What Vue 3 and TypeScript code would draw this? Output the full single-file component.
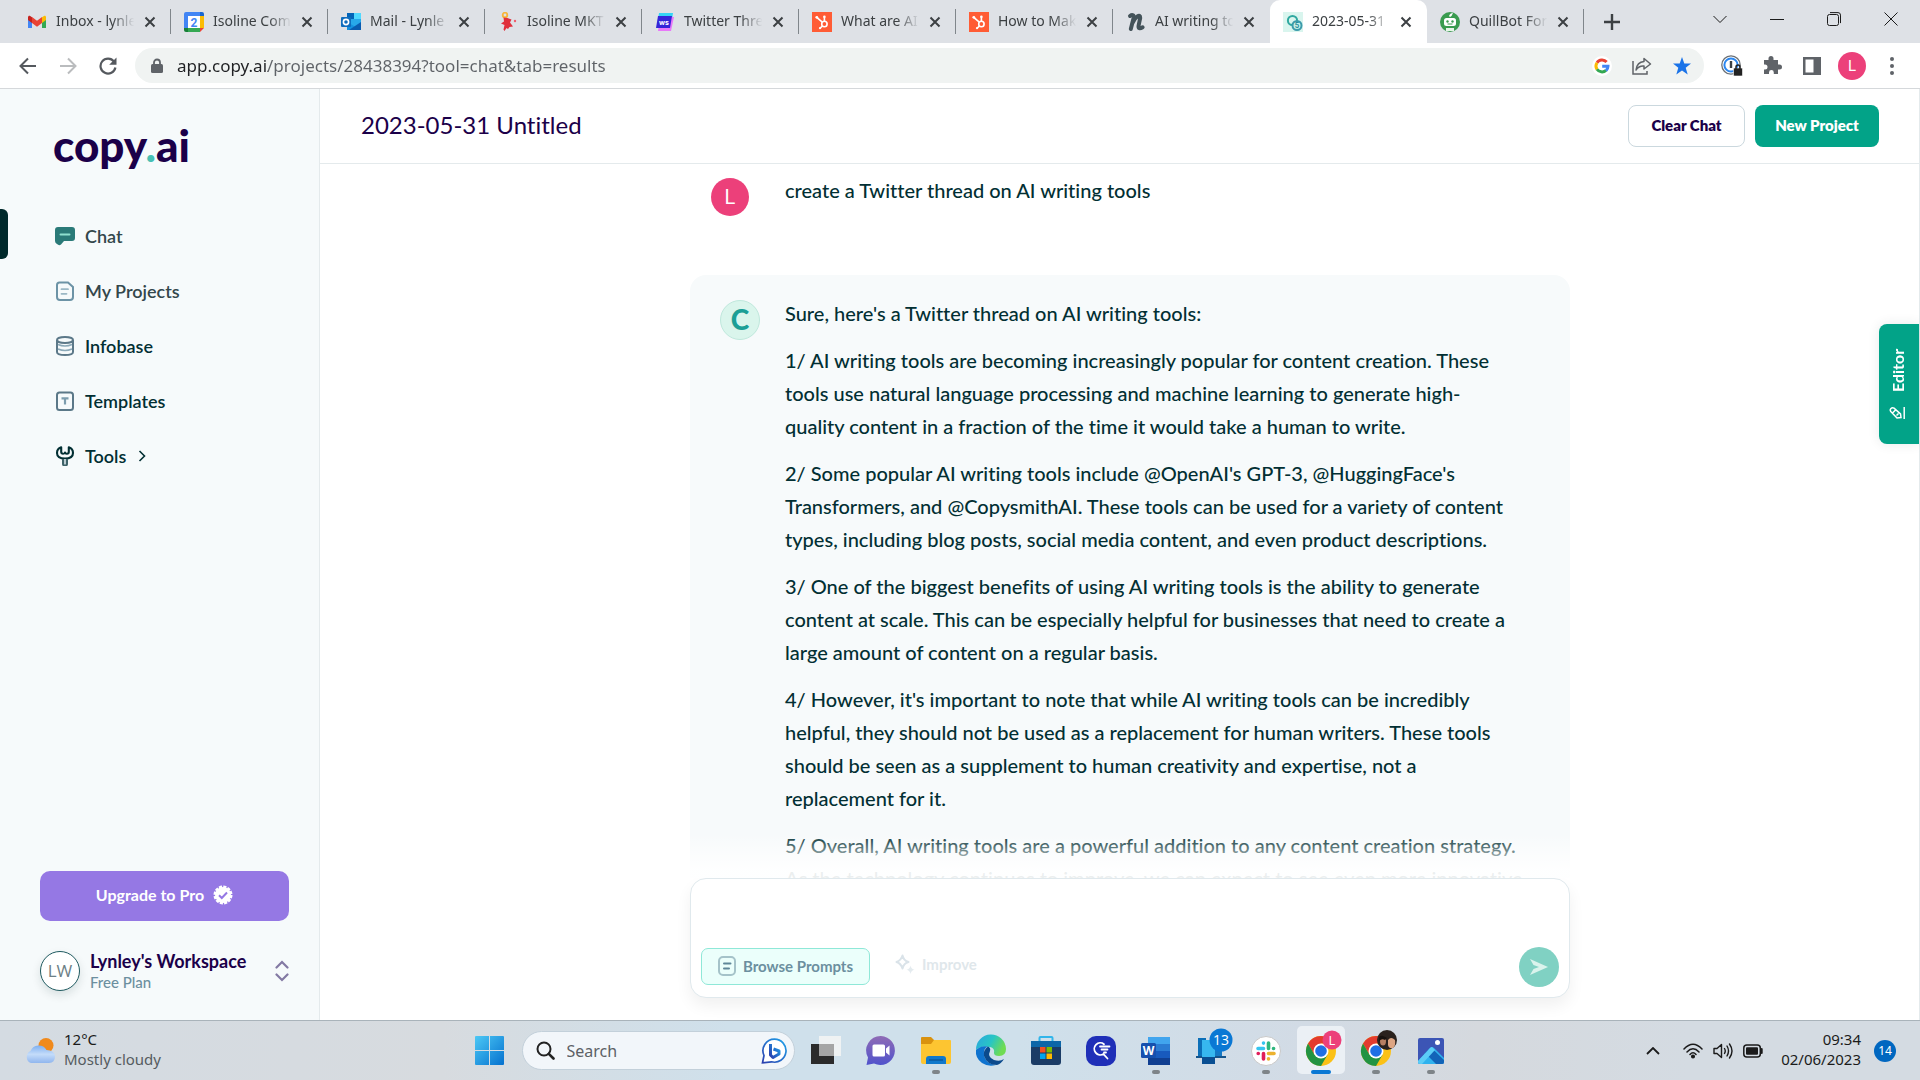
<script setup lang="ts">
import { ref } from 'vue'

interface Tab { title: string; icon: string; active?: boolean }
interface NavItem { label: string; icon: string; active?: boolean; strong?: boolean; more?: boolean }
interface TaskApp { name: string; icon: string; state?: 'open' | 'active' }

const hubspot =
  '<rect width="20" height="20" fill="#ff5c35"/><g fill="none" stroke="#fff" stroke-width="1.6"><circle cx="12.4" cy="12" r="2.7"/><path d="M12.4 9.2V5M10.3 10.2L5 5.6M10.4 14l-2.2 2.1"/></g><circle cx="12.4" cy="4.8" r="1.3" fill="#fff"/><circle cx="4.8" cy="5.3" r="1.4" fill="#fff"/><circle cx="8" cy="16.2" r="1.1" fill="#fff"/>'

const tabs: Tab[] = [
  { title: 'Inbox - lynle', icon: '<path d="M1 5v11h4V9z" fill="#4285f4"/><path d="M19 5v11h-4V9z" fill="#34a853"/><path d="M15 5.2L17 4c1-.6 2 0 2 1.200V8l-4 3z" fill="#fbbc04"/><path d="M5 5l5 3.800L15 5v6l-5 3.800L5 11z" fill="#ea4335"/><path d="M1 5.200C1 4 2.200 3.300 3.200 4L5 5.200V11L1 8z" fill="#c5221f"/>' },
  { title: 'Isoline Com', icon: '<path d="M0 2Q0 0 2 0H16V4H4V16H0Z" fill="#4285f4"/><path d="M16 0h2q2 0 2 2v2h-4z" fill="#1967d2"/><path d="M16 4h4v12h-4z" fill="#fbbc04"/><path d="M4 16h12v4H4z" fill="#34a853"/><path d="M0 16h4v4H2q-2 0-2-2z" fill="#188038"/><path d="M16 16h4l-4 4z" fill="#ea4335"/><path d="M4 4h12v12H4z" fill="#fff"/><text x="10" y="14.500" font-family="Roboto, sans-serif" font-size="12" font-weight="700" text-anchor="middle" fill="#4285f4">2</text>' },
  { title: 'Mail - Lynle', icon: '<rect x="6" y="1" width="14" height="16" rx="1" fill="#28a8ea"/><path d="M6 1h7v6H6z" fill="#0364b8"/><path d="M13 1h7v6h-7z" fill="#50d9ff"/><path d="M6 10l14 8H6z" fill="#1490df"/><path d="M20 10v8H8z" fill="#0a5cb0"/><rect y="5" width="10" height="10" rx="1" fill="#0f6cbd"/><circle cx="5" cy="10" r="2.600" fill="none" stroke="#fff" stroke-width="1.600"/>' },
  { title: 'Isoline MKT', icon: '<circle cx="7" cy="3" r="2.300" fill="none" stroke="#f7b538" stroke-width="1.800"/><path d="M5.500 5.500l4 .5 4 1.500-1.500 3 3 4-3.500.5-1.500 2-1.500-1-2 3-1-1.500 1-4.500-3.500-1.500 3-2z" fill="#e0303c"/><circle cx="17" cy="9" r="1.200" fill="#ee5d6c"/>' },
  { title: 'Twitter Thre', icon: '<path d="M4 1h14l-2 13H2z" fill="#35d5f5"/><path d="M5 5h14l-3 14H3z" fill="#e879f9"/><path d="M3 4h14l-2 12H1z" fill="#3525d8"/><text x="9" y="12.500" font-family="Inter, sans-serif" font-size="7" font-weight="700" text-anchor="middle" fill="#fff">ws</text>' },
  { title: 'What are AI', icon: hubspot },
  { title: 'How to Mak', icon: hubspot },
  { title: 'AI writing to', icon: '<path d="M4 4c2.500-2 4.200-.8 3.600 2L4.800 17M6.500 11C9 5 14.500 1 14.200 6L12.600 13.500c-.5 3 1.200 3.500 4 1.800" fill="none" stroke="#44535a" stroke-width="4" stroke-linecap="round"/>' },
  { title: '2023-05-31', active: true, icon: '<rect width="20" height="20" fill="#d9f5ee"/><g fill="none" stroke="#2fa8a0" stroke-width="2"><circle cx="9.500" cy="8.500" r="4.600"/></g><circle cx="14" cy="13.500" r="4.500" fill="#c7efe7" stroke="#3c9bab" stroke-width="2"/><text x="14" y="16.200" font-family="Inter, sans-serif" font-size="7" font-weight="700" text-anchor="middle" fill="#2b8d9b">5</text>' },
  { title: 'QuillBot For', icon: '<circle cx="10" cy="10" r="10" fill="#3a9b4f"/><path d="M9 4q1-3 4-3-1 3-3 4z" fill="#fff"/><rect x="4" y="6" width="12" height="8" rx="2.500" fill="#fff"/><circle cx="7.500" cy="9.500" r="1.200" fill="#3a9b4f"/><circle cx="12.500" cy="9.500" r="1.200" fill="#3a9b4f"/><path d="M7.500 12h5" stroke="#3a9b4f"/><path d="M6 16h8v3H6z" fill="#e6f5e8"/>' },
]

const nav: NavItem[] = [
  { label: 'Chat', active: true, icon: '<path d="M3 1h14q3 0 3 3v8q0 3-3 3H9l-3 3.500Q4 20 2 18q-2-1-2-3V4Q0 1 3 1z" fill="#2a7a78"/><path d="M5.500 8.500h9" stroke="#8fe0cf" stroke-width="2" stroke-linecap="round"/>' },
  { label: 'My Projects', icon: '<path d="M4.500 1.500H13L18 6v10q0 3-3 3H5q-3 0-3-3V4q0-2.500 2.500-2.500z" fill="none" stroke="#6c93a6" stroke-width="2"/><path d="M6.500 8.200h6.500M6.500 12.800h5" stroke="#9bb8c5" stroke-width="1.800" stroke-linecap="round"/>' },
  { label: 'Infobase', strong: true, icon: '<path d="M2 4v12q0 3 8 3t8-3V4" fill="none" stroke="#5b7888" stroke-width="2"/><ellipse cx="10" cy="4" rx="8" ry="3" fill="none" stroke="#5b7888" stroke-width="2"/><path d="M3 8.500q7 3 14 0M3 13q7 3 14 0" fill="none" stroke="#8ba9b8" stroke-width="1.600"/>' },
  { label: 'Templates', strong: true, icon: '<rect x="2" y="1.500" width="16" height="17.500" rx="2.500" fill="none" stroke="#5b7888" stroke-width="2"/><path d="M6.500 7.300h7M10 7.300v6.200" stroke="#7c9dae" stroke-width="2.200"/>' },
  { label: 'Tools', strong: true, more: true, icon: '<path d="M6.200 1.300Q2 2.500 2 7q0 5.500 8 5.500T18 7q0-4.500-4.200-5.700V6q0 1.700-1.900 1.700T10 6.500Q9.900 7.700 8.100 7.700T6.200 6z" fill="none" stroke="#022f33" stroke-width="2.100" stroke-linejoin="round"/><path d="M8 13v5q0 1.500 2 1.500t2-1.500v-5" fill="#b9cbd0" stroke="#3e6268" stroke-width="2"/>' },
]

const chrome =
  '<circle cx="15" cy="15" r="15" fill="#fbc116"/><path d="M2 7.500A15 15 0 0 1 28 7.500H15L8.500 18.800z" fill="#e33b2e"/><path d="M2 7.500A15 15 0 0 0 15 30L21.500 18.800 15 15 8.500 18.800z" fill="#229342"/><circle cx="15" cy="15" r="7.500" fill="#fff"/><circle cx="15" cy="15" r="5.800" fill="#1f6fe5"/>'

const apps: TaskApp[] = [
  { name: 'Task view', icon: '<path d="M0 8h23v20H0z" fill="#2b2b2b"/><path d="M8 0h22v20H8z" fill="#f5f5f5" opacity=".85"/><path d="M8 8h15v12H8z" fill="#a5a5a5"/>' },
  { name: 'Chat', icon: '<defs><linearGradient id="chatFill" x1="0" y1="0" x2="0" y2="1"><stop offset="0" stop-color="#8f6bb5"/><stop offset="1" stop-color="#5053cc"/></linearGradient></defs><path d="M15 0A14.500 14.500 0 1 1 8 27.500L.5 29l1.500-7.500A14.500 14.500 0 0 1 15 0z" fill="url(#chatFill)"/><rect x="6.500" y="8.500" width="12.500" height="12" rx="1.500" fill="#fff"/><path d="M20 12.500l3.500-3v10l-3.500-3z" fill="#fff"/>' },
  { name: 'File Explorer', state: 'open', icon: '<path d="M0 2q0-1 1-1h9l3 3v6H0z" fill="#d9920f"/><path d="M0 8h10l3-4h16q1 0 1 1v21q0 2-2 2H2q-2 0-2-2z" fill="#fdc531"/><path d="M5 28v-5q0-3 3-3h14q3 0 3 3v5z" fill="#1079cc"/><path d="M8 24h14" stroke="#0b5a9e" stroke-width="1.500"/>' },
  { name: 'Microsoft Edge', icon: '<defs><linearGradient id="edgeTop" x1="0" y1="0" x2="1" y2=".4"><stop offset="0" stop-color="#2ba6e0"/><stop offset=".55" stop-color="#28c5c5"/><stop offset="1" stop-color="#6fdc52"/></linearGradient></defs><path d="M0 14A15 15 0 0 1 30 13q0 7-7 7-5 0-5-3 1-5-4-6Q5 9 0 14z" fill="url(#edgeTop)"/><path d="M0 14Q5 9 12 10.500q-5 2-4 9Q10 28 20 29 12 31 6 27-1 22 0 14z" fill="#0f73cf"/><path d="M12 10.500Q7 14 8 20q3 9 13 9 4-1 7-6-4 3-10 1-7-3-4-9 1-3-2-4.500z" fill="#0b4a8d"/>' },
  { name: 'Microsoft Store', icon: '<path d="M8.500 6V2q0-1 1-1h11q1 0 1 1v4" fill="none" stroke="#31b5ea" stroke-width="2"/><path d="M0 5h30v21q0 3-3 3H3q-3 0-3-3z" fill="#1b3c66"/><path d="M0 5h30v6H0z" fill="#0d66a8"/><path d="M9 11h5.500v5.500H9z" fill="#f25022"/><path d="M15.500 11H21v5.500h-5.500z" fill="#7fba00"/><path d="M9 17.500h5.500V23H9z" fill="#00a4ef"/><path d="M15.500 17.500H21V23h-5.500z" fill="#ffb900"/>' },
  { name: 'Search tool', icon: '<rect width="30" height="30" rx="10" fill="#1f2fb8"/><g fill="none" stroke="#fff" stroke-width="1.800" stroke-linecap="round"><path d="M18 8.200A6 6 0 1 0 17.500 18M17.500 18.200L21.500 22.500M14 10.500h9.500M15.500 13.500h6M18 16.500h2"/></g>' },
  { name: 'Word', state: 'open', icon: '<path d="M7 1h22v7H7z" fill="#41a5ee"/><path d="M7 8h22v7H7z" fill="#2b7cd3"/><path d="M7 15h22v7H7z" fill="#185abd"/><path d="M7 22h22v7H7z" fill="#103f91"/><rect y="7" width="15" height="15" rx="1.500" fill="#1650ae"/><text x="7.500" y="18.500" font-family="Open Sans, sans-serif" font-size="12" font-weight="700" text-anchor="middle" fill="#fff">W</text>' },
  { name: 'Phone Link', icon: '<path d="M2 2h8v19H2z" fill="#0c6fb8"/><path d="M0 20h30v2H0z" fill="#14548c"/><path d="M6 4h13v18H6z" fill="#37b8ef"/><path d="M19 8h7v12h-7z" fill="#1478c4"/><path d="M6 21h13v7H6z" fill="#0a4f92"/><circle cx="25" cy="4" r="11.500" fill="#0a78d4"/><text x="25" y="9" font-family="Open Sans, sans-serif" font-size="14" text-anchor="middle" fill="#fff">13</text>' },
  { name: 'Slack', state: 'open', icon: '<circle cx="15" cy="15" r="14.500" fill="#fff" stroke="#c9c9c9"/><g stroke-width="3.600" stroke-linecap="round"><path d="M7 12.500h5.500M12.500 7v.1" stroke="#36c5f0"/><path d="M17.500 7v5.500M22.500 12.500h.1" stroke="#2eb67d"/><path d="M12.500 17.500V23M7.200 17.500h.1" stroke="#e01e5a"/><path d="M17.500 17.500H23M17.500 22.800v.1" stroke="#ecb22e"/></g>' },
  { name: 'Chrome, work profile', state: 'active', icon: chrome + '<circle cx="26" cy="4" r="9.500" fill="#ec407a"/><text x="26" y="8.500" font-family="Roboto, sans-serif" font-size="12" text-anchor="middle" fill="#fff">L</text>' },
  { name: 'Chrome, home profile', state: 'open', icon: chrome + '<circle cx="26" cy="4" r="10" fill="#2a211d"/><ellipse cx="22" cy="5" rx="3" ry="4.500" fill="#b77f62"/><path d="M27 4q3-4 7 0 1 5-2 8-4 1-5-3z" fill="#dda583"/><path d="M18 1q3-3 8 1l-2 2q-3-2-6 1z" fill="#17110e"/>' },
  { name: 'Photos', state: 'open', icon: '<rect x="2" y="2" width="26" height="26" rx="2" fill="#3c55b5"/><path d="M2 25L14 12q2-2 4 0l10 10v4q0 2-2 2H4q-2 0-2-2z" fill="#2fb2ee"/><path d="M15 11.500L28 24v2q0 2-2 2H20L9 17z" fill="#1264b8"/><path d="M2 25L14 12q1-1 2-1l3 3L6 28H4q-2 0-2-2z" fill="#5ccdf7"/><circle cx="21.500" cy="6.500" r="2.500" fill="#fff"/>' },
]

const reply: string[][] = [
  ["Sure, here's a Twitter thread on AI writing tools:"],
  ['1/ AI writing tools are becoming increasingly popular for content creation. These', 'tools use natural language processing and machine learning to generate high-', 'quality content in a fraction of the time it would take a human to write.'],
  ["2/ Some popular AI writing tools include @OpenAI's GPT-3, @HuggingFace's", 'Transformers, and @CopysmithAI. These tools can be used for a variety of content', 'types, including blog posts, social media content, and even product descriptions.'],
  ['3/ One of the biggest benefits of using AI writing tools is the ability to generate', 'content at scale. This can be especially helpful for businesses that need to create a', 'large amount of content on a regular basis.'],
  ["4/ However, it's important to note that while AI writing tools can be incredibly", 'helpful, they should not be used as a replacement for human writers. These tools', 'should be seen as a supplement to human creativity and expertise, not a', 'replacement for it.'],
  ['5/ Overall, AI writing tools are a powerful addition to any content creation strategy.', 'As the technology continues to improve, we can expect to see even more innovative'],
]

const address = ref('app.copy.ai/projects/28438394?tool=chat&tab=results')
const prompt = ref('')
const search = ref('')
</script>

<template>
  <div class="desktop">
    <div class="tabstrip">
      <div v-for="t in tabs" :key="t.title" class="tab" :class="{ active: t.active }">
        <svg class="favicon" viewBox="0 0 20 20" v-html="t.icon" />
        <span class="tab-title">{{ t.title }}</span>
        <button class="tab-close" :aria-label="'Close ' + t.title">
          <svg width="12" height="12" viewBox="0 0 12 12"><path d="M1.500 1.500l9 9M10.500 1.500l-9 9" stroke="#3c4043" stroke-width="2" /></svg>
        </button>
      </div>
      <button class="new-tab" aria-label="New tab">
        <svg width="16" height="16" viewBox="0 0 16 16"><path d="M8 0v16M0 8h16" stroke="#3c4043" stroke-width="2.400" /></svg>
      </button>
      <div class="window-controls">
        <button aria-label="Search tabs"><svg width="14" height="14" viewBox="0 0 14 14"><path d="M.5 4L7 10.500 13.500 4" /></svg></button>
        <button aria-label="Minimise"><svg width="14" height="14" viewBox="0 0 14 14"><path d="M0 7.500h14" /></svg></button>
        <button aria-label="Restore"><svg width="14" height="14" viewBox="0 0 14 14"><rect x=".5" y="2.500" width="11" height="11" rx="2" /><path d="M3 .6h8q2.500 0 2.500 2.500v8" /></svg></button>
        <button aria-label="Close window"><svg width="14" height="14" viewBox="0 0 14 14"><path d="M.5.5l13 13M13.500.5l-13 13" /></svg></button>
      </div>
    </div>

    <div class="toolbar">
      <button class="tool" aria-label="Back"><svg width="18" height="18" viewBox="0 0 18 18"><path d="M17 9H2M9 1.500L1.500 9 9 16.500" fill="none" stroke="#55595e" stroke-width="2" /></svg></button>
      <button class="tool" aria-label="Forward"><svg width="18" height="18" viewBox="0 0 18 18"><path d="M1 9h15M9 1.500L16.500 9 9 16.500" fill="none" stroke="#babcbe" stroke-width="2" /></svg></button>
      <button class="tool" aria-label="Reload"><svg width="18" height="18" viewBox="0 0 18 18"><path d="M15 4.500A7.500 7.500 0 1 0 16.400 10.500" fill="none" stroke="#55595e" stroke-width="2.200" /><path d="M17.500.5v7.300h-7.300z" fill="#55595e" /></svg></button>
      <div class="omnibox">
        <svg width="12" height="16" viewBox="0 0 12 16"><rect y="6" width="12" height="9" rx="1.500" fill="#5f6368" /><path d="M3 7V4.500a3 3 0 0 1 6 0V7" fill="none" stroke="#5f6368" stroke-width="1.800" /></svg>
        <input v-model="address" class="address" aria-label="Address" spellcheck="false" />
        <button class="tool" aria-label="Google"><svg width="20" height="20" viewBox="0 0 20 20"><circle cx="10" cy="10" r="10" fill="#fff" /><g fill="none" stroke-width="3"><path d="M14.600 6A6 6 0 0 0 5 6.800" stroke="#ea4335" /><path d="M5 6.700a6 6 0 0 0 0 6.600" stroke="#fbbc04" /><path d="M5 13.200a6 6 0 0 0 9 1.200" stroke="#34a853" /><path d="M14 14.600A6 6 0 0 0 16 10.200H10.200" stroke="#4285f4" /></g></svg></button>
        <button class="tool" aria-label="Share"><svg width="20" height="18" viewBox="0 0 20 18" fill="none" stroke="#5f6368" stroke-width="1.500"><path d="M1 4v13h14v-3" /><path d="M12 1.500L18.500 7 12 12V9Q7 8.500 4 13q1-8 8-8.500z" stroke-linejoin="round" /></svg></button>
        <button class="tool" aria-label="Bookmark"><svg width="18" height="18" viewBox="0 0 18 18"><path d="M9 0l2.300 6.500H18l-5.300 4.200 2 6.900L9 13.500l-5.700 4.100 2-6.900L0 6.500h6.700z" fill="#1a73e8" /></svg></button>
      </div>
      <button class="tool first-ext" aria-label="1Password"><svg width="22" height="22" viewBox="0 0 22 22"><circle cx="10" cy="10" r="9.200" fill="#fff" stroke="#6b7075" stroke-width="1.300" /><circle cx="10" cy="10" r="6.600" fill="none" stroke="#2b87f0" stroke-width="2" /><path d="M10 6v7" stroke="#3b4045" stroke-width="2.400" /><rect x="12.500" y="13" width="9" height="8" rx="1" fill="#222" stroke="#fff" stroke-width=".6" /><path d="M15 14v-2a2 2 0 0 1 4 0v2" fill="none" stroke="#222" stroke-width="1.500" /></svg></button>
      <button class="tool" aria-label="Extensions"><svg width="19" height="19" viewBox="0 0 19 19"><path d="M1 4h4.500V2.500a2.500 2.500 0 0 1 5 0V4H15v4.500h1.500a2.500 2.500 0 0 1 0 5H15V18h-4.200v-1.500a2.400 2.400 0 0 0-4.800 0V18H1v-4.500h1a2.400 2.400 0 0 0 0-5H1z" fill="#5f6368" /></svg></button>
      <button class="tool" aria-label="Side panel"><svg width="18" height="18" viewBox="0 0 18 18"><path d="M0 0h18v18H0z" fill="#5f6368" /><path d="M2.500 2.500h8v13h-8z" fill="#fff" /></svg></button>
      <button class="tool" aria-label="Profile"><span class="profile">L</span></button>
      <button class="tool" aria-label="Menu"><svg width="4" height="18" viewBox="0 0 4 18" fill="#5f6368"><circle cx="2" cy="2" r="2" /><circle cx="2" cy="9" r="2" /><circle cx="2" cy="16" r="2" /></svg></button>
    </div>

    <div class="page">
      <aside class="sidebar">
        <a href="#" class="logo">copy<span>.</span>ai</a>
        <nav>
          <a v-for="n in nav" :key="n.label" href="#" class="nav-item" :class="{ current: n.active, strong: n.strong }">
            <svg width="20" height="20" viewBox="0 0 20 20" v-html="n.icon" />
            <span>{{ n.label }}</span>
            <svg v-if="n.more" class="more" width="8" height="12" viewBox="0 0 8 12"><path d="M1.500 1L6.500 6l-5 5" fill="none" stroke="#022f33" stroke-width="1.600" /></svg>
          </a>
        </nav>
        <button class="upgrade">
          Upgrade to Pro
          <svg width="20" height="20" viewBox="0 0 20 20"><circle cx="10" cy="10" r="8" fill="#fff" stroke="#fff" stroke-width="3" stroke-dasharray="3 1.190" /><path d="M6 10.200l2.800 2.800L14 7.500" fill="none" stroke="#9578e4" stroke-width="2" /></svg>
        </button>
        <button class="workspace">
          <span class="initials">LW</span>
          <span class="who"><strong>Lynley's Workspace</strong><small>Free Plan</small></span>
          <svg width="14" height="22" viewBox="0 0 14 22" fill="none" stroke="#8379a3" stroke-width="2.200" stroke-linecap="round"><path d="M1.500 7.500L7 2l5.500 5.500M1.500 14.500L7 20l5.500-5.500" /></svg>
        </button>
      </aside>

      <main class="main">
        <header class="header">
          <h1>2023-05-31 Untitled</h1>
          <button class="btn outline">Clear Chat</button>
          <button class="btn solid">New Project</button>
        </header>

        <section class="thread">
          <div class="message user">
            <span class="avatar">L</span>
            <p>create a Twitter thread on AI writing tools</p>
          </div>
          <article class="message bot">
            <span class="avatar">C</span>
            <div class="reply">
              <p v-for="(para, i) in reply" :key="i">
                <span v-for="line in para" :key="line">{{ line }}</span>
              </p>
            </div>
          </article>
        </section>

        <form class="composer" @submit.prevent>
          <textarea v-model="prompt" aria-label="Message"></textarea>
          <div class="actions">
            <button type="button" class="browse">
              <svg width="18" height="20" viewBox="0 0 18 20" fill="none"><rect x="1" y="1" width="16" height="18" rx="4" stroke="#a5c3c9" stroke-width="2" /><path d="M6 7.500h6.500M6 12.500h5" stroke="#5f8799" stroke-width="2" stroke-linecap="round" /></svg>
              Browse Prompts
            </button>
            <button type="button" class="improve">
              <svg width="20" height="20" viewBox="0 0 20 20"><path d="M7.500 1.500Q8.500 6.500 13.500 8 8.500 9.500 7.500 14.500 6 9.500 1.500 8 6 6.500 7.500 1.500z" fill="none" stroke="#dae3e9" stroke-width="2" stroke-linejoin="round" /><path d="M15.500 11.500Q16 15 19.500 15.700 16 16.500 15.500 20 15 16.500 11.500 15.700 15 15 15.500 11.500z" fill="#e4ebef" /></svg>
              Improve
            </button>
            <button type="submit" class="send" aria-label="Send">
              <svg width="20" height="18" viewBox="0 0 20 18"><path d="M1 1l18 8L1 17l3.500-6L10 9 4.500 7z" fill="#daf3ec" /></svg>
            </button>
          </div>
        </form>

        <button class="editor">
          <svg width="16" height="16" viewBox="0 0 16 16" fill="none" stroke="#fff" stroke-width="1.500"><path d="M2.500 12L2 8 8.500 1.800q1.500-1.200 3 .2t.3 3L6 11.500zM7 3.500l3.500 3.500M4.500 7.500l2 2M1 15.200h12" /></svg>
          Editor
        </button>
      </main>
    </div>

    <footer class="taskbar">
      <div class="weather">
        <svg width="32" height="28" viewBox="0 0 32 28"><defs><linearGradient id="cloud" x1="0" y1="0" x2="0" y2="1"><stop offset="0" stop-color="#7fb0f0" /><stop offset=".5" stop-color="#c4dcfa" /><stop offset="1" stop-color="#90b6ee" /></linearGradient></defs><circle cx="22" cy="8.500" r="7.500" fill="#f08a1c" /><path d="M7 26a6.500 6.500 0 0 1-.5-12A9 9 0 0 1 22.500 13q8 0 8.500 6.500 0 6-6 6.500z" fill="url(#cloud)" /></svg>
        <p><span>12°C</span><span class="dim">Mostly cloudy</span></p>
      </div>

      <div class="dock">
        <button class="app" aria-label="Start"><svg width="29" height="29" viewBox="0 0 29 29"><defs><linearGradient id="win" x1="0" y1="0" x2="1" y2="1"><stop offset="0" stop-color="#4cc8f5" /><stop offset="1" stop-color="#0571cf" /></linearGradient></defs><path d="M1 0h13v14H0V1q0-1 1-1zM15 0h13q1 0 1 1v13H15zM0 15h14v14H1q-1 0-1-1zM15 15h14v13q0 1-1 1H15z" fill="url(#win)" /></svg></button>
        <label class="search">
          <svg width="19" height="19" viewBox="0 0 19 19"><circle cx="8" cy="8" r="6.500" fill="none" stroke="#222" stroke-width="2" /><path d="M12.800 12.800L17.500 17.500" stroke="#222" stroke-width="2.600" stroke-linecap="round" /></svg>
          <input v-model="search" placeholder="Search" aria-label="Search" />
          <svg width="26" height="26" viewBox="0 0 26 26"><defs><linearGradient id="bing" x1="0" y1="1" x2="1" y2="0"><stop offset="0" stop-color="#2b3fae" /><stop offset="1" stop-color="#1fa2ea" /></linearGradient></defs><path d="M13.500 1.200a11.500 11.500 0 1 1-3 22.600L1.500 24.800 3 17.500A11.500 11.500 0 0 1 13.500 1.200z" fill="#fff" stroke="url(#bing)" stroke-width="1.700" /><path d="M9.500 6v11l2.500 2.500 6-3.500v-3l-5.500-2" fill="none" stroke="url(#bing)" stroke-width="3" stroke-linejoin="round" /></svg>
        </label>
        <button v-for="a in apps" :key="a.name" class="app" :class="a.state" :aria-label="a.name">
          <svg width="30" height="30" viewBox="0 0 30 30" v-html="a.icon" />
        </button>
      </div>

      <div class="tray">
        <svg width="14" height="8" viewBox="0 0 14 8"><path d="M1 7l6-6 6 6" fill="none" stroke="#1b1b1b" stroke-width="1.800" /></svg>
        <svg class="wifi" width="20" height="16" viewBox="0 0 20 16" fill="none" stroke="#1b1b1b" stroke-width="1.500" stroke-linecap="round"><path d="M1 6q9-9.500 18 0M4 9q6-6.500 12 0M7 11.500q3-3.500 6 0" /><circle cx="10" cy="13.500" r="1.300" fill="#1b1b1b" /></svg>
        <svg width="20" height="18" viewBox="0 0 20 18" fill="none" stroke="#1b1b1b" stroke-width="1.400" stroke-linecap="round"><path d="M1 6.500h3L8.500 2.500v13L4 11.500H1z" stroke-linejoin="round" /><path d="M11.500 6.500q1.500 2.500 0 5M14 4q3 5 0 10M16.500 2q5 7 0 14" /></svg>
        <svg width="20" height="14" viewBox="0 0 20 14"><rect x=".8" y="1" width="16.500" height="12" rx="3" fill="none" stroke="#1b1b1b" stroke-width="1.500" /><rect x="3" y="3.200" width="12" height="7.600" rx="1" fill="#1b1b1b" /><path d="M18.700 5v4" stroke="#1b1b1b" stroke-width="2" stroke-linecap="round" /></svg>
        <p class="clock"><span>09:34</span><span>02/06/2023</span></p>
        <span class="count">14</span>
      </div>
    </footer>
  </div>
</template>

<style>
body { margin: 0; }
</style>

<style scoped>
* { box-sizing: border-box; }
button, input, textarea { font: inherit; color: inherit; border: 0; background: none; padding: 0; margin: 0; outline: 0; }
button { display: flex; align-items: center; justify-content: center; }
svg { flex: none; display: block; }
p, h1 { margin: 0; }
a { color: inherit; text-decoration: none; }

.desktop { height: 100vh; display: flex; flex-direction: column; overflow: hidden; background: #fff; font-family: "Noto Sans", "Open Sans", sans-serif; font-size: 14px; }

.tabstrip { height: 43px; flex: none; display: flex; align-items: stretch; padding-left: 14px; background: #dee1e6; }
.tab { position: relative; width: 157px; display: flex; align-items: center; padding: 0 13px; color: #3c4043; }
.tab::after { content: ""; position: absolute; right: 0; top: 9px; width: 1px; height: 25px; background: #80868b; }
.tab.active { background: #fff; border-radius: 10px 10px 0 0; }
.tab.active::after, .tab:has(+ .active)::after { display: none; }
.favicon { width: 20px; height: 20px; }
.tab-title { flex: 1; min-width: 0; margin-left: 9px; padding-bottom: 2px; overflow: hidden; white-space: nowrap; line-height: 20px; mask-image: linear-gradient(to right, #000 70%, transparent 98%); }
.tab-close { width: 16px; height: 16px; margin-left: 6px; }
.new-tab { width: 56px; }
.window-controls { margin-left: auto; display: flex; padding-right: 1px; }
.window-controls button { width: 57px; padding-bottom: 6px; }
.window-controls svg { fill: none; stroke: #1b1b1b; stroke-width: 1; }

.toolbar { height: 46px; flex: none; display: flex; align-items: center; padding: 0 8px; border-bottom: 1px solid #d5d8db; }
.tool { width: 40px; height: 40px; flex: none; }
.omnibox { flex: 1; height: 35px; margin-left: 7px; padding: 0 2px 0 16px; display: flex; align-items: center; border-radius: 18px; background: #f0f3f2; }
.address { flex: 1; margin-left: 14px; height: 30px; font-size: 17px; color: transparent; background: linear-gradient(to right, #202124 91px, #5f6368 91px); background-clip: text; }
.first-ext { margin-left: 8px; }
.profile { width: 28px; height: 28px; border-radius: 50%; background: #ec407a; color: #fff; font: 15px/28px Roboto, sans-serif; text-align: center; }

.page { flex: 1; min-height: 0; display: flex; font-family: Lato, "Open Sans", sans-serif; font-variant-ligatures: none; color: #022f33; }
.sidebar { width: 320px; flex: none; display: flex; flex-direction: column; padding: 0 30px 28px 40px; background: #f6fafb; border-right: 1px solid #e4eaec; }
.logo { margin: 30px 0 0 13px; font-size: 44px; line-height: 52px; font-weight: 900; color: #1b0049; }
.logo span { color: #48c0b4; }
nav { margin: 38px 0 0 -40px; display: flex; flex-direction: column; gap: 5px; }
.nav-item { height: 50px; position: relative; display: flex; align-items: center; padding: 3px 0 0 55px; gap: 10px; font-size: 18px; font-weight: 600; color: #33474b; }
.nav-item.strong { color: #022f33; }
.nav-item.current::before { content: ""; position: absolute; left: 0; top: 0; width: 8px; height: 50px; border-radius: 0 6px 6px 0; background: #00292b; }
.more { margin-left: 2px; }
.upgrade { margin-top: auto; height: 50px; gap: 9px; padding-bottom: 3px; border-radius: 10px; background: #9578e4; color: #fff; font-size: 16px; font-weight: 700; }
.workspace { margin-top: 29px; height: 42px; justify-content: flex-start; text-align: left; }
.initials { width: 40px; height: 40px; border: 1px solid #1f5a60; border-radius: 50%; background: #fff; color: #6d7f86; font: 17px/38px "Open Sans", sans-serif; text-align: center; box-shadow: 0 4px 10px rgba(0, 40, 40, .12); }
.who { flex: 1; margin-left: 10px; display: flex; flex-direction: column; }
.who strong { font-size: 18px; line-height: 22px; font-weight: 700; color: #1b0049; }
.who small { font-size: 15px; line-height: 20px; font-weight: 500; color: #6c8f9f; }

.main { position: relative; flex: 1; min-width: 0; display: flex; flex-direction: column; border-right: 1px solid #e4eaec; }
.header { height: 75px; flex: none; display: flex; align-items: center; gap: 10px; padding: 0 40px 0 41px; border-bottom: 1px solid #e4eaec; }
.header h1 { flex: 1; padding-bottom: 2px; font-size: 24px; line-height: 32px; font-weight: 400; color: #1b0049; }
.btn { height: 42px; padding-bottom: 3px; border-radius: 8px; font-size: 15px; font-weight: 800; }
.outline { width: 117px; border: 1px solid #cbd8de; color: #1b0049; }
.solid { width: 124px; background: #02a388; color: #fff; }

.thread { position: relative; flex: 1; min-height: 0; width: 880px; margin-left: 370px; overflow: hidden; font-size: 20px; line-height: 33px; font-weight: 500; }
.thread::after { content: ""; position: absolute; left: 0; right: 0; bottom: 0; height: 44px; background: linear-gradient(to bottom, rgba(255, 255, 255, 0), rgba(255, 255, 255, .92) 80%); }
.message { display: flex; align-items: flex-start; white-space: nowrap; }
.user { padding: 10px 0 0 21px; height: 111px; }
.avatar { flex: none; border-radius: 50%; text-align: center; }
.user .avatar { width: 38px; height: 38px; margin: 4px 36px 0 0; background: #ec407a; color: #fff; font: 20px/38px Roboto, sans-serif; }
.bot { padding: 22px 30px 24px 30px; border-radius: 16px 16px 0 0; background: #f7fafb; }
.bot .avatar { width: 40px; height: 40px; margin: 3px 25px 0 0; border: 1px solid #bfe8dc; background: #daf5ec; color: #1c9f96; font-size: 28px; line-height: 37px; font-weight: 900; }
.reply { display: flex; flex-direction: column; gap: 14px; }
.reply span { display: block; }

.composer { width: 880px; height: 120px; flex: none; margin: 0 0 22px 370px; padding: 8px 10px 11px; display: flex; flex-direction: column; border: 1px solid #e0e9ed; border-radius: 16px; background: #fff; box-shadow: 0 8px 16px rgba(0, 0, 0, .06); }
textarea { flex: 1; min-height: 0; resize: none; }
.actions { display: flex; align-items: center; height: 40px; font-size: 15px; font-weight: 700; }
.browse { width: 169px; height: 37px; gap: 7px; border: 1px solid #8fe8d8; border-radius: 7px; background: #ebfffb; color: #6c8f9f; }
.improve { margin-left: 25px; height: 40px; gap: 7px; color: #dfe7eb; padding-bottom: 5px; }
.send { width: 40px; height: 40px; margin: 1px 0 0 auto; border-radius: 50%; background: #80d1c3; }

.editor { position: absolute; right: 0; top: 235px; width: 40px; height: 120px; padding-left: 3px; writing-mode: vertical-rl; rotate: 180deg; gap: 12px; border-radius: 0 8px 8px 0; background: #02a388; color: #fff; font-size: 16px; font-weight: 700; box-shadow: 0 0 12px rgba(0, 60, 60, .1); }
.editor svg { rotate: 90deg; }

.taskbar { height: 60px; flex: none; display: grid; grid-template-columns: 1fr auto 1fr; align-items: center; border-top: 1px solid #a9b3ba; background: linear-gradient(to right, #d4dbe2, #d7dbdf 23%, #cfe0eb 38%, #cfe0eb 53%, #d2dbe5 68%, #d5d9de 77%, #d4dbe2 88%); color: #1b1b1b; }
.weather { display: flex; align-items: center; gap: 8px; padding-left: 24px; }
.weather p, .clock { display: flex; flex-direction: column; padding-bottom: 3px; font-size: 15px; line-height: 20px; }
.dim { color: #555b60; }
.dock { display: flex; align-items: center; height: 59px; }
.app { position: relative; width: 55px; height: 59px; }
.app svg { overflow: visible; position: relative; }
.app.active::before { content: ""; position: absolute; left: 3px; top: 5px; width: 48px; height: 48px; border-radius: 5px; background: #ebf0f5; }
.app.open::after, .app.active::after { content: ""; position: absolute; bottom: 6px; width: 8px; height: 4px; border-radius: 2px; background: #7e8488; }
.app.active::after { width: 20px; background: #0a78d4; }
.search { width: 273px; height: 39px; margin: 0 4px 0 5px; padding: 0 7px 0 13px; display: flex; align-items: center; gap: 12px; border: 1px solid #c3d0da; border-radius: 20px; background: #f2f6fa; }
.search input { flex: 1; min-width: 0; font-size: 16px; }
.search input::placeholder { color: #5c6166; opacity: 1; }
.tray { display: flex; align-items: center; justify-content: flex-end; gap: 10px; padding-right: 24px; }
.wifi { margin-left: 13px; }
.clock { margin-left: 8px; text-align: right; }
.count { width: 22px; height: 22px; margin-left: 3px; border-radius: 50%; background: #0067c0; color: #fff; font-size: 12px; line-height: 22px; text-align: center; }
</style>
